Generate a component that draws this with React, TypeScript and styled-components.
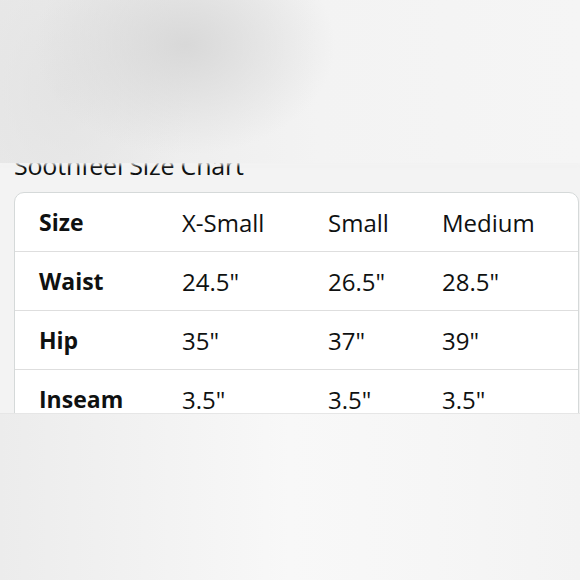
import React from 'react';
import styled, { createGlobalStyle } from 'styled-components';

const GlobalStyle = createGlobalStyle`
	html, body {
		margin: 0;
		padding: 0;
		background: #f4f4f4;
	}
	body {
		font-family: 'Open Sans', 'Noto Sans', sans-serif;
		color: #0f1111;
	}
`;

const Page = styled.div`
	width: 580px;
	height: 580px;
	display: flex;
	flex-direction: column;
	overflow: hidden;
`;

const TopShade = styled.div`
	height: 163px;
	flex: 0 0 auto;
	background:
		radial-gradient(ellipse 150px 110px at 185px 45px, rgba(214, 214, 214, 0.9), rgba(224, 224, 224, 0) 100%),
		radial-gradient(ellipse 130px 160px at 60px 90px, rgba(226, 226, 226, 0.8), rgba(232, 232, 232, 0) 100%),
		linear-gradient(to right, #e9e9e9 0%, #eeeeee 30%, #f3f3f3 55%, #f5f5f5 100%);
	box-shadow: 0 2px 3px rgba(242, 242, 242, 0.9);
	position: relative;
	z-index: 1;
`;

const Sheet = styled.div`
	height: 250px;
	flex: 0 0 auto;
	overflow: hidden;
	background: #f3f3f3;
	padding-left: 14px;
	box-sizing: border-box;
`;

const Title = styled.h2`
	margin: -10px 0 0;
	font-size: 25px;
	font-weight: 400;
	line-height: 24px;
	letter-spacing: -0.2px;
	white-space: nowrap;
`;

const Table = styled.div`
	margin-top: 15px;
	background: #ffffff;
	border: 1px solid #d5d9d9;
	border-radius: 10px;
	margin-right: 1px;
`;

const Row = styled.div<{ $first?: boolean }>`
	display: grid;
	grid-template-columns: 143px 146px 114px 1fr;
	height: 58px;
	align-items: center;
	padding-left: 24px;
	border-top: ${({ $first }) => ($first ? 'none' : '1px solid #dedede')};
`;

const Cell = styled.div<{ $head?: boolean }>`
	font-size: ${({ $head }) => ($head ? '23px' : '24px')};
	font-weight: ${({ $head }) => ($head ? 700 : 400)};
	white-space: nowrap;
`;

const BottomShade = styled.div`
	flex: 1 1 auto;
	border-top: 1px solid #e6e6e6;
	background: linear-gradient(to right, #ececec 0%, #f2f2f2 25%, #f8f8f8 50%, #f6f6f6 75%, #f3f3f3 100%);
`;

const rows = [
	['Size', 'X-Small', 'Small', 'Medium'],
	['Waist', '24.5"', '26.5"', '28.5"'],
	['Hip', '35"', '37"', '39"'],
	['Inseam', '3.5"', '3.5"', '3.5"'],
];

export default function App() {
	return (
		<Page>
			<GlobalStyle />
			<TopShade />
			<Sheet>
				<Title>Soothfeel Size Chart</Title>
				<Table>
					{rows.map((r, i) => (
						<Row key={r[0]} $first={i === 0}>
							{r.map((c, j) => (
								<Cell key={j} $head={j === 0}>
									{c}
								</Cell>
							))}
						</Row>
					))}
				</Table>
			</Sheet>
			<BottomShade />
		</Page>
	);
}
